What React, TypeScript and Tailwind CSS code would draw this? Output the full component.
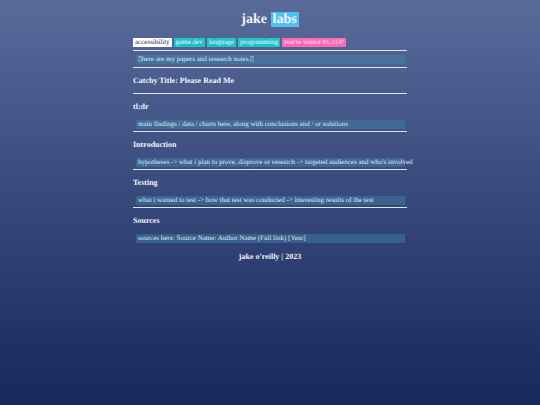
import type { ReactNode } from "react";

const tags = ["game dev", "language", "programming"];

const sections = [
  { title: "tl;dr", text: "main findings / data / charts here, along with conclusions and / or solutions" },
  {
    title: "Introduction",
    text: "hypotheses -> what i plan to prove, disprove or research -> targeted audiences and who's involved",
  },
  {
    title: "Testing",
    text: "what i wanted to test -> how that test was conducted -> interesting results of the test",
  },
  { title: "Sources", text: "sources here: Source Name: Author Name (Full link) [Year]" },
];

function Note({ children }: { children: ReactNode }) {
  return (
    <p className="ml-[3px] mr-[2px] whitespace-nowrap bg-[#4384aa]/45 px-[2px] text-[7px] leading-[9px] text-[#dcebf8]">
      {children}
    </p>
  );
}

function Rule() {
  return <hr className="h-px border-0 bg-[#dfe3f4]" />;
}

export default function App() {
  return (
    <div className="min-h-screen bg-linear-to-b from-[#596a9b] to-[#18275c] font-['Liberation_Serif',serif] text-[#f2f4fb] [text-rendering:geometricPrecision]">
      <div className="mx-auto w-[274px] max-w-full pt-3">
        <h1 className="text-center text-[14px] font-bold leading-[15px]">
          jake <span className="inline-block bg-[#4fc0ef] px-[2px]">labs</span>
        </h1>

        <nav className="mt-[11px] flex gap-[2px] text-[7px] leading-[9px]">
          <a href="#accessibility" className="bg-white px-[2px] text-[#26304f]">
            accessibility
          </a>
          {tags.map((tag) => (
            <a key={tag} href="#tags" className="bg-[#1fc3c6] px-[2px] text-[#e6fafa]">
              {tag}
            </a>
          ))}
          <span className="bg-[#ff69b4] px-[2px] text-[#ffe3f1]">you're visitor #1,114!</span>
        </nav>

        <main className="mt-[3px]">
          <Rule />
          <div className="pb-[3px] pt-1">
            <Note>▯here are my papers and research notes.▯</Note>
          </div>
          <Rule />
          <h2 className="pb-[7px] pt-2 text-[8px] font-bold leading-[10px]">
            Catchy Title: Please Read Me
          </h2>
          {sections.map(({ title, text }) => (
            <section key={title}>
              <Rule />
              <h3 className="py-2 text-[8px] font-bold leading-[10px]">{title}</h3>
              <div className="pb-[2px]">
                <Note>{text}</Note>
              </div>
            </section>
          ))}
        </main>

        <footer className="pt-[7px] text-center text-[8px] font-bold leading-[10px]">
          jake o'reilly | 2023
        </footer>
      </div>
    </div>
  );
}
